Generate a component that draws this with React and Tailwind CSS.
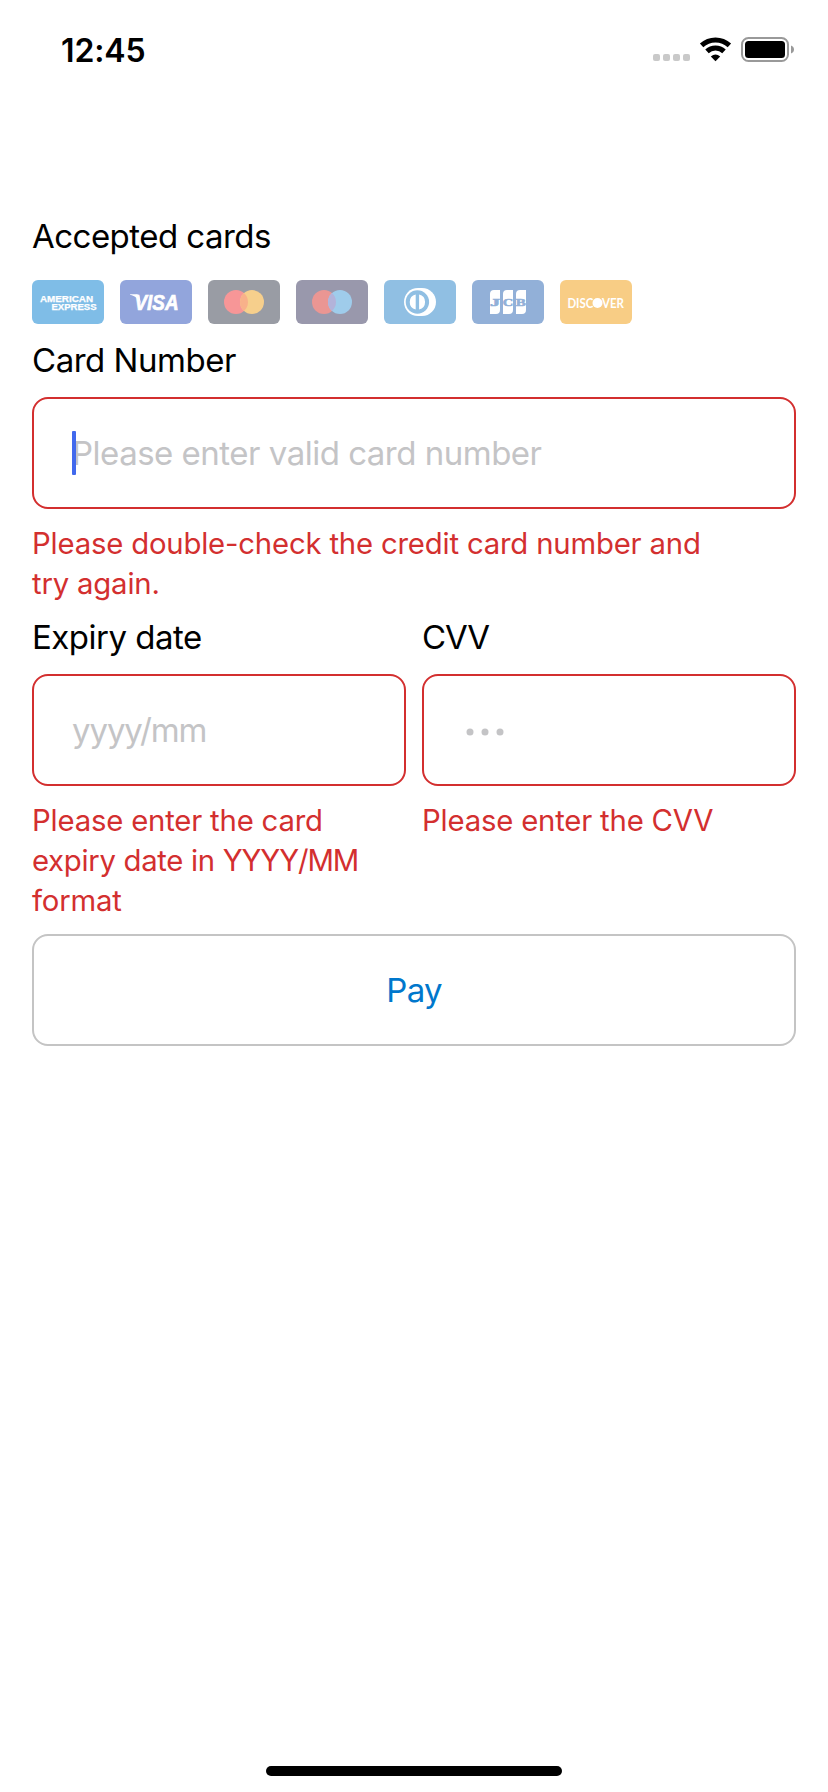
import React from "react";

const brandText = { fontFamily: '"Liberation Sans", Arial, sans-serif' };

function CardTile({ label, className, children }) {
  return (
    <div className={`h-11 w-18 overflow-hidden rounded-[6px] ${className}`}>
      <svg viewBox="0 0 72 44" width="72" height="44" role="img" aria-label={label} style={brandText}>
        {children}
      </svg>
    </div>
  );
}

function AcceptedCards() {
  return (
    <div className="flex gap-4">
      <CardTile label="American Express" className="bg-[#7fbde7]">
        <text x="8" y="22" fontSize="8.6" fontWeight="700" fill="#fff" stroke="#fff" strokeWidth="0.25" textLength="53" lengthAdjust="spacingAndGlyphs">AMERICAN</text>
        <text x="19.5" y="30" fontSize="8.6" fontWeight="700" fill="#fff" stroke="#fff" strokeWidth="0.25" textLength="45" lengthAdjust="spacingAndGlyphs">EXPRESS</text>
      </CardTile>
      <CardTile label="Visa" className="bg-[#92a5dc]">
        <path d="M10 14.2H16.6C18 14.2 19 15 19.4 16.4L21 24C19 19 15 16 10 14.8Z" fill="#fff" />
        <text x="14.5" y="29.8" fontSize="21.8" fontWeight="700" fontStyle="italic" fill="#fff" stroke="#fff" strokeWidth="0.7" textLength="44" lengthAdjust="spacingAndGlyphs">VISA</text>
      </CardTile>
      <CardTile label="Mastercard" className="bg-[#999ca4]">
        <circle cx="28" cy="22" r="12" fill="#f79697" />
        <circle cx="44" cy="22" r="12" fill="#f6cf8c" />
        <path d="M36 13.06a12 12 0 0 1 0 17.88a12 12 0 0 1 0-17.88Z" fill="#f8b18a" />
      </CardTile>
      <CardTile label="Maestro" className="bg-[#9998ac]">
        <circle cx="28" cy="22" r="12" fill="#ea9693" />
        <circle cx="44" cy="22" r="12" fill="#9fcceb" />
        <path d="M36 13.06a12 12 0 0 1 0 17.88a12 12 0 0 1 0-17.88Z" fill="#b3b3da" />
      </CardTile>
      <CardTile label="Diners Club" className="bg-[#90bfe3]">
        <path d="M34 8H38C46 8 52 14.4 52 22S46 36 38 36H34C26 36 20 29.8 20 22S26 8 34 8Z" fill="#fff" />
        <circle cx="33.4" cy="22" r="11.7" fill="#90bfe3" />
        <path d="M31.7 14.5a7.7 7.7 0 0 0 0 15ZM35.1 14.5a7.7 7.7 0 0 1 0 15Z" fill="#fff" />
      </CardTile>
      <CardTile label="JCB" className="bg-[#92b0d8]">
        <path d="M22 10H28V30a4 4 0 0 1-4 4H18V14a4 4 0 0 1 4-4ZM35 10H41V30a4 4 0 0 1-4 4H31V14a4 4 0 0 1 4-4ZM48 10H54V30a4 4 0 0 1-4 4H44V14a4 4 0 0 1 4-4Z" fill="#fff" />
        <g fontSize="11" fontWeight="700" fill="#92b0d8" stroke="#92b0d8" strokeWidth="0.6" style={{ fontFamily: '"Liberation Serif", serif' }}>
          <text x="18" y="26" textLength="10" lengthAdjust="spacingAndGlyphs">J</text>
          <text x="30.8" y="26" textLength="10.4" lengthAdjust="spacingAndGlyphs">C</text>
          <text x="43.8" y="26" textLength="10" lengthAdjust="spacingAndGlyphs">B</text>
        </g>
      </CardTile>
      <CardTile label="Discover" className="bg-[#f8cd85]">
        <g fontSize="13.2" fontWeight="700" fill="#fff" style={{ fontFamily: "Lato, sans-serif" }}>
          <text x="7.4" y="27.6" textLength="26" lengthAdjust="spacingAndGlyphs">DISC</text>
          <text x="42" y="27.6" textLength="22" lengthAdjust="spacingAndGlyphs">VER</text>
        </g>
        <circle cx="37.5" cy="23" r="5" fill="#fff" />
      </CardTile>
    </div>
  );
}

function StatusBar() {
  return (
    <header className="flex h-[100px] items-center justify-between pr-[34px] pl-[61px]">
      <span className="pt-px text-[32px] leading-10 font-semibold tracking-[-0.1px]">12:45</span>
      <svg width="142" height="28" viewBox="0 0 142 28" aria-hidden="true">
        <g fill="#c9c9c9">
          <rect x="1" y="18" width="7" height="7" rx="2" />
          <rect x="11" y="18" width="7" height="7" rx="2" />
          <rect x="21" y="18" width="7" height="7" rx="2" />
          <rect x="31" y="18" width="7" height="7" rx="2" />
        </g>
        <g fill="none" stroke="#000" strokeWidth="5">
          <path d="M49.6 9.4a20.4 20.4 0 0 1 27.8 0" />
          <path d="M55 15.4a12.2 12.2 0 0 1 17 0" />
        </g>
        <path d="M58.8 20.4a7.4 7.4 0 0 1 9.4 0L63.5 25.2Z" fill="#000" />
        <rect x="90" y="2" width="46" height="23" rx="6.5" fill="none" stroke="#999" strokeWidth="2" />
        <rect x="93" y="5" width="40" height="17" rx="3.5" fill="#000" />
        <path d="M139 9.6q3 1.2 3 4t-3 4Z" fill="#999" />
      </svg>
    </header>
  );
}

function Label({ children, className = "tracking-[-0.5px]" }) {
  return <div className={`h-10 text-[33px] leading-10 whitespace-nowrap ${className}`}>{children}</div>;
}

function Field({ focused, children }) {
  return (
    <div className="relative mt-[17px] flex h-28 items-center rounded-[16px] border-2 border-[#d32f2f] pl-[38px] text-[33px] leading-10 whitespace-nowrap text-[#c4c4c6]">
      {focused && <span className="absolute top-8 left-[38px] h-11 w-1 rounded-[1px] bg-[#4169ed]" />}
      {children}
    </div>
  );
}

function FieldError({ children }) {
  return (
    <p className="mt-[15px] mb-[-1px] text-[29.3px] leading-10 tracking-[-0.18px] whitespace-nowrap text-[#d32f2f]">
      {children}
    </p>
  );
}

export default function App() {
  return (
    <div className="flex h-[1792px] w-[828px] flex-col bg-white font-['Inter',sans-serif] text-black">
      <StatusBar />
      <main className="flex flex-1 flex-col px-8 pt-[116px]">
        <Label className="mb-6 tracking-[-0.53px]">Accepted cards</Label>
        <AcceptedCards />
        <Label className="mt-4 tracking-[-0.48px]">Card Number</Label>
        <Field focused>
          <span className="tracking-[-0.5px]">Please enter valid card number</span>
        </Field>
        <FieldError>
          Please double-check the credit card number and
          <br />
          try again.
        </FieldError>
        <div className="mt-3.5 grid grid-cols-2 gap-4">
          <div>
            <Label>Expiry date</Label>
            <Field>
              <span className="tracking-[-1.1px]">yyyy/mm</span>
            </Field>
            <FieldError>
              Please enter the card
              <br />
              <span className="tracking-[-0.3px]">expiry date in </span>
              <span className="tracking-[-1.1px]">YYYY/MM</span>
              <br />
              format
            </FieldError>
          </div>
          <div>
            <Label className="tracking-[-1px]">CVV</Label>
            <Field>
              <svg width="48" height="12" viewBox="0 0 48 12" fill="#c4c4c6" role="img" aria-label="Security code">
                <circle cx="8" cy="8" r="3.5" />
                <circle cx="23" cy="8" r="3.5" />
                <circle cx="38" cy="8" r="3.5" />
              </svg>
            </Field>
            <FieldError>Please enter the CVV</FieldError>
          </div>
        </div>
        <button className="mt-3.5 h-28 rounded-[16px] border-2 border-[#c4c4c4] text-[33px] leading-10 tracking-[-0.8px] text-[#0077cc]">Pay</button>
      </main>
      <footer className="flex h-[26px] justify-center">
        <div className="h-2.5 w-[296px] rounded-full bg-black" />
      </footer>
    </div>
  );
}
